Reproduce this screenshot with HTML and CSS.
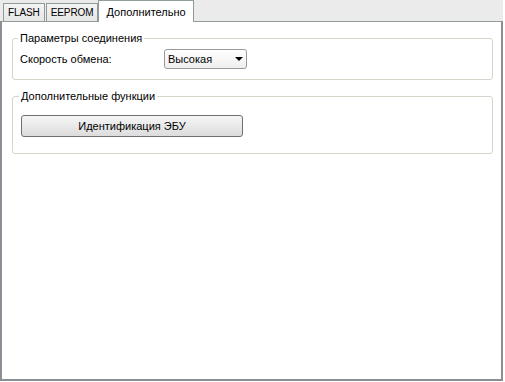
FILE: index.html
```html
<!DOCTYPE html>
<html lang="ru">
  <head>
    <meta charset="UTF-8" />
    <title>Дополнительно</title>
    <link rel="stylesheet" href="styles.css">
  </head>
  <body>
    <div class="window">
      <div class="tabs">
        <div class="tab">FLASH</div>
        <div class="tab">EEPROM</div>
        <div class="tab active">Дополнительно</div>
      </div>
      <div class="panel">
        <fieldset class="group group-conn">
          <legend>Параметры соединения</legend>
          <div class="row">
            <span class="label">Скорость обмена:</span>
            <div class="combo">
              <span>Высокая</span>
              <span class="arrow"></span>
            </div>
          </div>
        </fieldset>
        <fieldset class="group group-func">
          <legend>Дополнительные функции</legend>
          <button class="btn">Идентификация ЭБУ</button>
        </fieldset>
      </div>
    </div>
  </body>
</html>
```

FILE: styles.css
```css
body {
  margin: 0;
  background: #ffffff;
  font-family: "Liberation Sans", Arial, sans-serif;
  font-size: 11px;
  color: #000;
}
.window {
  width: 503px;
  height: 381px;
  display: flex;
  flex-direction: column;
  background: #ebebeb;
}
.tabs {
  height: 21px;
  display: flex;
  align-items: flex-end;
  padding-left: 3px;
  gap: 1px;
}
.tab {
  height: 17px;
  line-height: 17px;
  padding: 0 4px;
  border: 1px solid #919b9c;
  border-bottom: none;
  background: linear-gradient(#f4f4f4, #e6e6e6);
  font-size: 10px;
  letter-spacing: -0.1px;
  color: #000;
}
.tab.active {
  height: 21px;
  line-height: 22px;
  padding: 0 7px;
  margin-left: -1px;
  margin-bottom: -1px;
  background: #fff;
  font-size: 11px;
  letter-spacing: 0;
  position: relative;
  z-index: 1;
}
.panel {
  flex: 1;
  background: #fff;
  border: 1px solid #919b9c;
  border-left: 2px solid #8a8f96;
  border-right: 2px solid #8a8f96;
  border-bottom: 2px solid #8a8f96;
  padding: 0 8px 0 10px;
}
.group {
  margin: 10px 0 0 0;
  border: 1px solid #d5d5cc;
  border-radius: 3px;
  padding: 4px 7px 10px 7px;
}
.group legend {
  padding: 0 2px;
  margin-left: -2px;
  line-height: 13px;
}
.group-func {
  padding: 12px 7px 16px 8px;
}
.row {
  display: flex;
  align-items: center;
}
.label {
  width: 144px;
}
.combo {
  width: 78px;
  height: 18px;
  border: 1px solid #9a9a9a;
  border-radius: 3px;
  background: linear-gradient(#ffffff, #eeeeee);
  display: flex;
  align-items: center;
  justify-content: space-between;
  padding: 0 0 0 3px;
  box-sizing: content-box;
}
.arrow {
  width: 0;
  height: 0;
  border-left: 4px solid transparent;
  border-right: 4px solid transparent;
  border-top: 4px solid #000;
  margin-right: 3px;
}
.btn {
  display: block;
  width: 222px;
  height: 22px;
  margin: 0;
  padding: 0;
  border: 1px solid #707070;
  border-radius: 3px;
  background: linear-gradient(#f6f6f6, #dcdcdc);
  font-family: "Liberation Sans", Arial, sans-serif;
  font-size: 11px;
  color: #000;
}
```
